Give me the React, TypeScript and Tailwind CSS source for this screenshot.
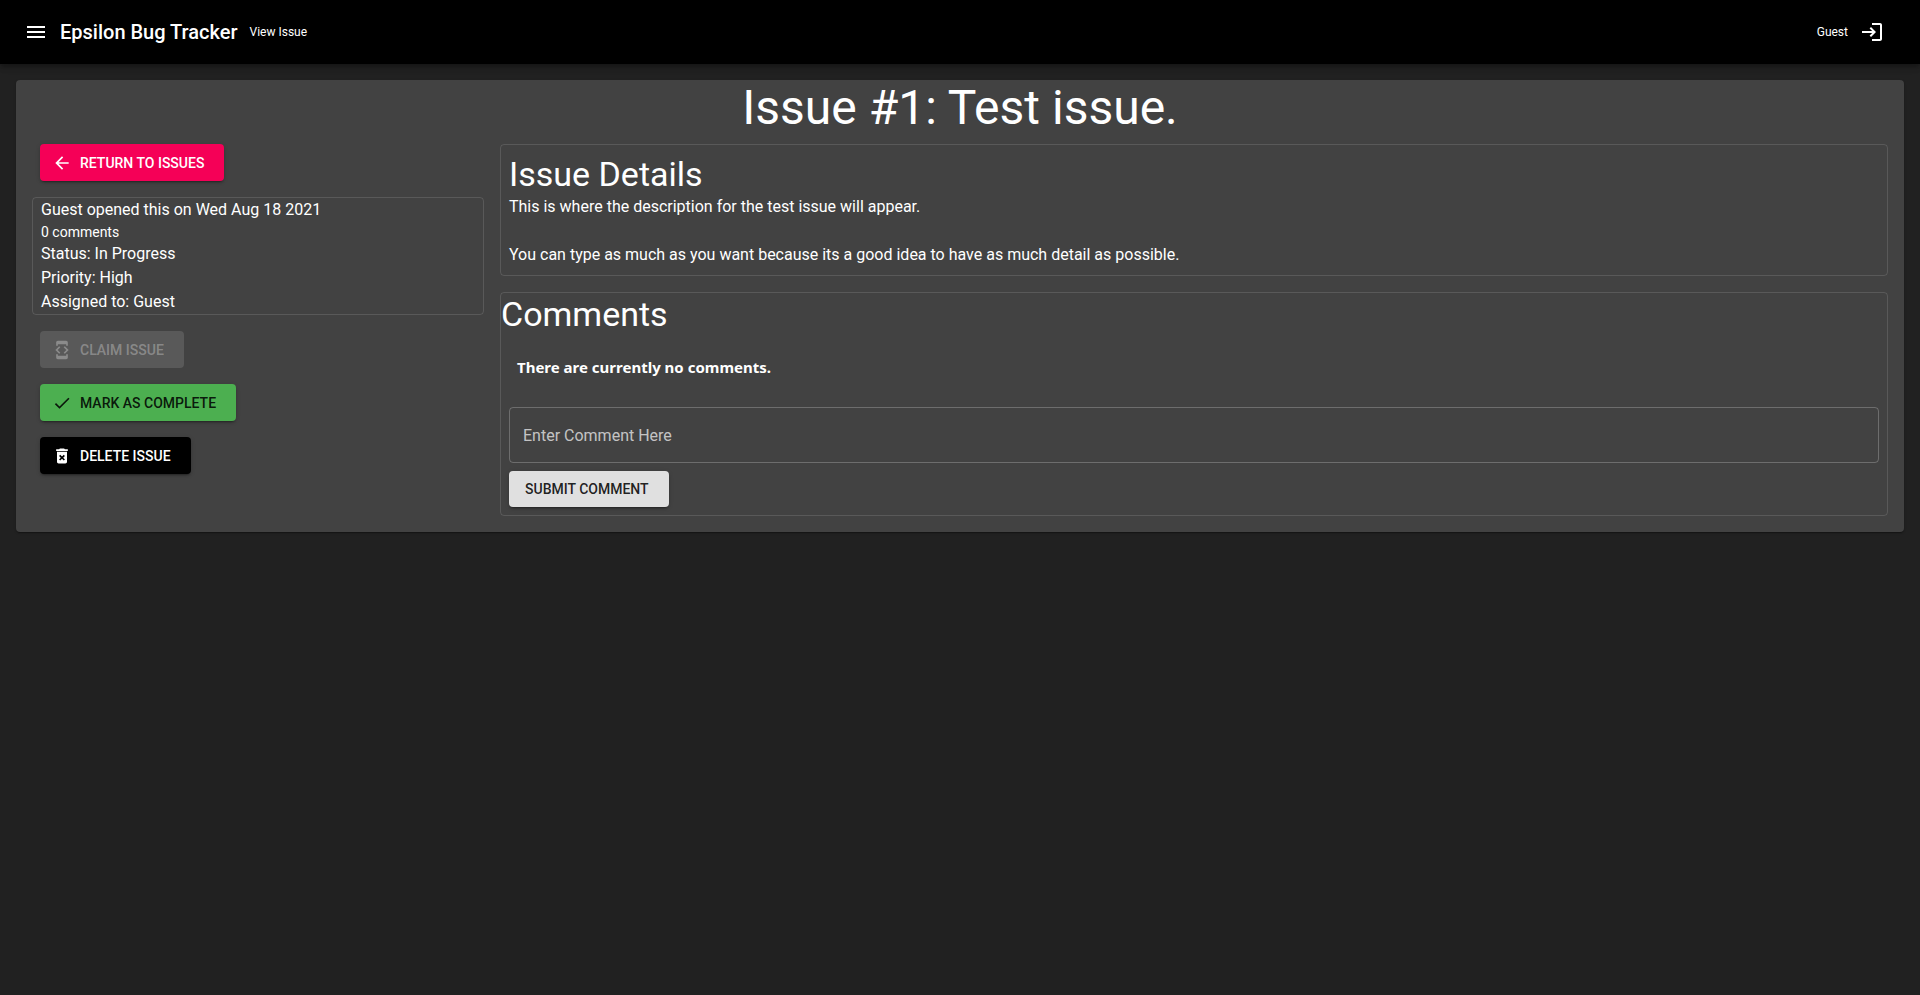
import type { ButtonHTMLAttributes, ReactNode } from "react";
import {
  MdArrowBack,
  MdCheck,
  MdDeleteForever,
  MdDeveloperMode,
  MdLogin,
  MdMenu,
} from "react-icons/md";

const raised =
  "shadow-[0_3px_1px_-2px_rgba(0,0,0,0.2),0_2px_2px_0_rgba(0,0,0,0.14),0_1px_5px_0_rgba(0,0,0,0.12)]";

interface ActionButtonProps extends ButtonHTMLAttributes<HTMLButtonElement> {
  icon?: ReactNode;
  tone: string;
}

function ActionButton({ icon, tone, children, ...rest }: ActionButtonProps) {
  return (
    <button
      type="button"
      className={`flex items-center gap-2 rounded pr-5 pl-4 text-sm font-medium uppercase ${tone}`}
      {...rest}
    >
      {icon && <span className="-ml-1 text-xl">{icon}</span>}
      {children}
    </button>
  );
}

function Header() {
  return (
    <header className="relative flex h-16 items-center bg-black px-3 shadow-[0_2px_4px_-1px_rgba(0,0,0,0.2),0_4px_5px_0_rgba(0,0,0,0.14),0_1px_10px_0_rgba(0,0,0,0.12)]">
      <button type="button" aria-label="Open menu" className="p-3 text-2xl">
        <MdMenu />
      </button>
      <span className="text-xl font-medium">Epsilon Bug Tracker</span>
      <span className="ml-3 text-xs">View Issue</span>
      <span className="ml-auto text-xs">Guest</span>
      <button type="button" aria-label="Log in" className="mr-3 p-3 text-2xl">
        <MdLogin />
      </button>
    </header>
  );
}

function IssueSidebar() {
  return (
    <aside className="col-span-3 flex flex-col items-start gap-4">
      <ActionButton icon={<MdArrowBack />} tone={`ml-2 h-[37px] bg-[#f50057] ${raised}`}>
        Return to issues
      </ActionButton>
      <div className="w-full rounded border border-white/12 px-2">
        <p>Guest opened this on Wed Aug 18 2021</p>
        <p className="text-sm">0 comments</p>
        <p>Status: In Progress</p>
        <p>Priority: High</p>
        <p>Assigned to: Guest</p>
      </div>
      <ActionButton
        icon={<MdDeveloperMode />}
        tone="ml-2 h-[37px] bg-white/12 text-white/30"
        disabled
      >
        Claim issue
      </ActionButton>
      <ActionButton icon={<MdCheck />} tone={`ml-2 h-[37px] bg-[#4caf50] text-black/87 ${raised}`}>
        Mark as complete
      </ActionButton>
      <ActionButton icon={<MdDeleteForever />} tone={`ml-2 h-[37px] bg-black ${raised}`}>
        Delete issue
      </ActionButton>
    </aside>
  );
}

function IssueBody() {
  return (
    <div className="col-span-9 flex flex-col gap-4">
      <section className="rounded border border-white/12 p-2">
        <h2 className="text-[34px] leading-[42px]">Issue Details</h2>
        <p>This is where the description for the test issue will appear.</p>
        <p className="mt-6">
          You can type as much as you want because its a good idea to have as much detail as
          possible.
        </p>
      </section>
      <section className="rounded border border-white/12">
        <h2 className="text-[34px] leading-[42px]">Comments</h2>
        <p className="px-4 pt-5 pb-7 font-['Noto_Sans',sans-serif] text-[15px] leading-6 font-bold">
          There are currently no comments.
        </p>
        <form className="flex flex-col items-start gap-2 px-2 pb-2">
          <input
            type="text"
            aria-label="Enter Comment Here"
            placeholder="Enter Comment Here"
            className="h-14 w-full rounded border border-white/23 bg-transparent px-[13px] placeholder:text-white/70"
          />
          <ActionButton tone={`h-9 bg-[#e0e0e0] text-black/87 ${raised}`}>
            Submit comment
          </ActionButton>
        </form>
      </section>
    </div>
  );
}

export default function App() {
  return (
    <div className="min-h-screen bg-[#212121] font-[Roboto,sans-serif] text-base text-white">
      <Header />
      <main className="m-4 rounded bg-[#424242] px-4 pb-4 shadow-[0_2px_1px_-1px_rgba(0,0,0,0.2),0_1px_1px_0_rgba(0,0,0,0.14),0_1px_3px_0_rgba(0,0,0,0.12)]">
        <h1 className="mb-2 text-center text-5xl leading-14">Issue #1: Test issue.</h1>
        <div className="grid grid-cols-12 gap-4">
          <IssueSidebar />
          <IssueBody />
        </div>
      </main>
    </div>
  );
}
